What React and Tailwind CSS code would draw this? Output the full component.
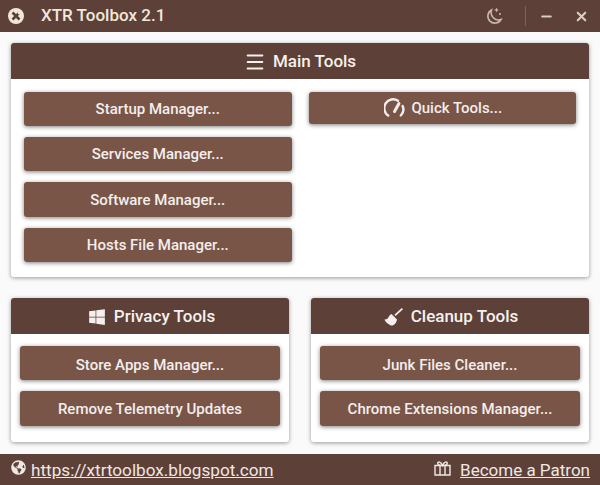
import { Menu, Minus, X } from 'lucide-react';
import { FaGlobeAmericas, FaWindows } from 'react-icons/fa';

const Boton = ({ children, className = 'h-[34px] pt-px' }) => (
    <div className={`flex items-center justify-center gap-[6px] rounded-[3px] bg-[#795548] text-[15px] font-medium text-[#f3eeec] shadow-[0_1px_4px_rgba(0,0,0,0.5)] ${className}`}>
        {children}
    </div>
);

const Cabecera = ({ icon, className = 'gap-[8px]', children }) => (
    <div className={`flex h-[36px] items-center justify-center rounded-t-[3px] bg-[#5d4037] pt-px text-[17px] font-medium text-[#f5f0ee] ${className}`}>
        {icon}
        <span>{children}</span>
    </div>
);

const Gauge = () => (
    <svg width="21" height="21" viewBox="0 0 21 21" fill="none" stroke="currentColor" strokeWidth="2.4" strokeLinecap="round">
        <path d="M4.2 17.5A8.6 8.6 0 0 1 14 2.8" />
        <path d="M16.8 17.5A8.6 8.6 0 0 0 18.6 8" />
        <path d="M10.5 13.5L15 5.5" strokeWidth="3" />
    </svg>
);

const Logo = () => (
    <svg width="16" height="16" viewBox="0 0 16 16">
        <circle cx="8" cy="8" r="8" fill="#f1e7df" />
        <path d="M4.5 4.5L11.5 11.5M11.5 4.5L4.5 11.5" stroke="#5d4037" strokeWidth="2.6" />
        <circle cx="11.3" cy="4.7" r="1.7" fill="#f1e7df" />
    </svg>
);

const Luna = () => (
    <svg className="ml-auto text-[#c9b7ae]" width="20" height="20" viewBox="0 0 20 20" fill="none" stroke="currentColor" strokeWidth="1.6">
        <path d="M7.5 4A7 7 0 1 0 17 13.5 7.5 7.5 0 0 1 7.5 4Z" />
        <path d="M12.5 1.5l.7 1.8 1.8.7-1.8.7-.7 1.8-.7-1.8-1.8-.7 1.8-.7z" fill="currentColor" stroke="none" />
        <circle cx="16" cy="8" r="1" fill="currentColor" stroke="none" />
    </svg>
);

const Escoba = () => (
    <svg width="19" height="18" viewBox="0 0 19 18" fill="currentColor">
        <path d="M18.4 0.6L11 7.4" stroke="currentColor" strokeWidth="1.8" fill="none" />
        <path d="M7.5 6L13 11.5C12.5 14.5 10.5 17 8.5 17.6C6 17.6 2 15 0.4 11.5C1.5 11.5 3 11 4 10.2C4.6 8.6 5.8 6.8 7.5 6Z" />
    </svg>
);

const Regalo = () => (
    <svg className="mb-[3px]" width="17" height="15" viewBox="0 0 17 15" fill="none" stroke="currentColor" strokeWidth="1.4">
        <path d="M1 4.5H16V14H1Z" />
        <path d="M6 4.5V14M11 4.5V14" />
        <path d="M8.5 4.5C7 1 4 0 3.7 2C3.5 3.5 5.5 4.5 8.5 4.5C11.5 4.5 13.5 3.5 13.3 2C13 0 10 1 8.5 4.5Z" />
    </svg>
);

export default function App() {
    return (
        <div className="flex h-[485px] w-[600px] flex-col overflow-hidden bg-[#fafafa] font-['Roboto',sans-serif]">
            <header className="flex h-[32px] shrink-0 items-center bg-[#5d4037] text-[#f1e7df]">
                <div className="ml-[8px]"><Logo /></div>
                <span className="ml-[17px] text-[17px] font-medium">XTR Toolbox 2.1</span>
                <Luna />
                <div className="ml-[21px] h-[20px] w-px bg-[#7d6258]" />
                <Minus className="ml-[13px] text-[#d9ccc6]" size={15} strokeWidth={3} />
                <X className="ml-[20px] mr-[11px] text-[#d9ccc6]" size={15} strokeWidth={3.4} />
            </header>

            <main className="flex flex-1 flex-col px-[11px] pt-[11px]">
                <section className="h-[234px] rounded-[3px] bg-white shadow-[0_1px_4px_rgba(0,0,0,0.4)]">
                    <Cabecera icon={<Menu size={22} strokeWidth={2.2} />} className="gap-[7px]">Main Tools</Cabecera>
                    <div className="grid grid-cols-2 gap-x-[17px] px-[13px] pt-[13px]">
                        <div className="flex flex-col gap-[11px]">
                            <Boton>Startup Manager...</Boton>
                            <Boton>Services Manager...</Boton>
                            <Boton className="h-[35px] pt-[2px]">Software Manager...</Boton>
                            <Boton className="h-[34px]">Hosts File Manager...</Boton>
                        </div>
                        <div>
                            <Boton className="h-[32px] pt-px pl-[2px]"><Gauge /> Quick Tools...</Boton>
                        </div>
                    </div>
                </section>

                <div className="mt-[21px] grid grid-cols-2 gap-x-[22px]">
                    <section className="h-[144px] rounded-[3px] bg-white shadow-[0_1px_4px_rgba(0,0,0,0.4)]">
                        <Cabecera icon={<FaWindows size={18} />} className="gap-[8px] pl-[3px]">Privacy Tools</Cabecera>
                        <div className="flex flex-col gap-[11px] px-[9px] pt-[12px]">
                            <Boton className="h-[34px] pt-[4px]">Store Apps Manager...</Boton>
                            <Boton className="h-[35px] pt-[2px]">Remove Telemetry Updates</Boton>
                        </div>
                    </section>
                    <section className="h-[144px] rounded-[3px] bg-white shadow-[0_1px_4px_rgba(0,0,0,0.4)]">
                        <Cabecera icon={<Escoba />} className="gap-[8px] pl-[2px]">Cleanup Tools</Cabecera>
                        <div className="flex flex-col gap-[11px] px-[9px] pt-[12px]">
                            <Boton className="h-[34px] pt-[4px]">Junk Files Cleaner...</Boton>
                            <Boton className="h-[35px] pt-[2px]">Chrome Extensions Manager...</Boton>
                        </div>
                    </section>
                </div>
            </main>

            <footer className="flex h-[31px] shrink-0 items-center justify-between bg-[#5d4037] pl-[11px] pr-[10px] text-[#efe7e3]">
                <div className="flex items-center gap-[5px] text-[17.15px]">
                    <FaGlobeAmericas className="mb-[3px]" size={15} />
                    <span className="pt-[3px] underline underline-offset-[1px]">https://xtrtoolbox.blogspot.com</span>
                </div>
                <div className="flex items-center gap-[9px] text-[17px]">
                    <Regalo />
                    <span className="pt-[3px] underline underline-offset-[1px]">Become a Patron</span>
                </div>
            </footer>
        </div>
    );
}
